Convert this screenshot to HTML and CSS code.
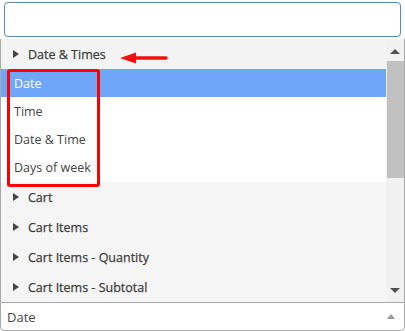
FILE: index.html
```html
<!DOCTYPE html>
<html lang="en">
<head>
    <meta charset="UTF-8">
    <meta name="viewport" content="width=device-width, initial-scale=1.0">
    <title>Select field</title>
    <link rel="stylesheet" href="styles.css">
</head>
<body>
    <div class="picker">
        <div class="search"></div>

        <div class="dropdown">
            <ul class="results">
                <li class="group">Date &amp; Times</li>
                <li class="option active">Date</li>
                <li class="option">Time</li>
                <li class="option">Date &amp; Time</li>
                <li class="option">Days of week</li>
                <li class="group dim">Cart</li>
                <li class="group dim">Cart Items</li>
                <li class="group dim">Cart Items - Quantity</li>
                <li class="group dim">Cart Items - Subtotal</li>
            </ul>
            <div class="scrollbar">
                <span class="arrow up"></span>
                <span class="thumb"></span>
                <span class="track"></span>
                <span class="arrow down"></span>
            </div>
        </div>

        <div class="selection">
            <span>Date</span>
            <span class="caret"></span>
        </div>

        <!-- annotation -->
        <div class="mark-box"></div>
        <svg class="mark-arrow" width="50" height="14" viewBox="0 0 50 14">
            <path d="M14 7 H47" stroke="#ee1111" stroke-width="3.5" stroke-linecap="round"/>
            <path d="M1 7 L17 1.5 L17 12.5 Z" fill="#ee1111"/>
        </svg>
    </div>
</body>
</html>
```

FILE: styles.css
```css
body {
    margin: 0;
    background: #fff;
    font-family: "Open Sans", Arial, sans-serif;
    font-size: 13px;
    color: #444;
}

.picker {
    position: relative;
    width: 405px;
    height: 331px;
}

.search {
    margin: 2px 4px 0 4px;
    height: 33px;
    border: 1px solid #5b8cb9;
    border-radius: 4px;
    box-shadow: 0 0 1px #8fb4d6;
}

.dropdown {
    display: flex;
    height: 263px;
    margin-top: 2px;
    border-left: 1px solid #a9a9a9;
    border-right: 1px solid #a9a9a9;
    overflow: hidden;
}

.results {
    flex: 1;
    margin: 0;
    padding: 0;
    list-style: none;
    font-size: 12.5px;
}

.results li {
    display: flex;
    align-items: center;
    white-space: nowrap;
}

.group {
    height: 30px;
    padding-left: 27px;
    position: relative;
    background: #f3f3f3;
    color: #3c3c3c;
    -webkit-text-stroke: 0.25px #3c3c3c;
}

.group::before {
    content: "";
    position: absolute;
    left: 12px;
    top: 11px;
    border-left: 6px solid #444;
    border-top: 4px solid transparent;
    border-bottom: 4px solid transparent;
}

.group.dim {
    background: #f5f5f5;
}

.option {
    height: 28.25px;
    padding-left: 13px;
    background: #fff;
}

.option.active {
    background: #70a6f9;
    color: #fff;
}

.scrollbar {
    width: 18px;
    background: #f1f1f1;
    display: flex;
    flex-direction: column;
    align-items: center;
}

.arrow {
    width: 0;
    height: 0;
    border-left: 5px solid transparent;
    border-right: 5px solid transparent;
}

.arrow.up {
    margin: 10px 0 7px;
    border-bottom: 5px solid #505050;
}

.arrow.down {
    margin: 0 0 9px;
    border-top: 5px solid #505050;
}

.thumb {
    width: 17px;
    height: 117px;
    margin-left: 1px;
    background: #c1c1c1;
}

.track {
    flex: 1;
}

.selection {
    height: 27px;
    display: flex;
    align-items: center;
    justify-content: space-between;
    padding: 0 9px 0 6px;
    border: 1px solid #a9a9a9;
    border-radius: 0 0 4px 4px;
}

.caret {
    width: 0;
    height: 0;
    border-left: 4px solid transparent;
    border-right: 4px solid transparent;
    border-bottom: 5px solid #9a9a9a;
}

.mark-box {
    position: absolute;
    left: 7px;
    top: 67px;
    width: 87px;
    height: 112px;
    border: 3px solid #f00;
    border-radius: 3px;
}

.mark-arrow {
    position: absolute;
    left: 119px;
    top: 49px;
}
```
